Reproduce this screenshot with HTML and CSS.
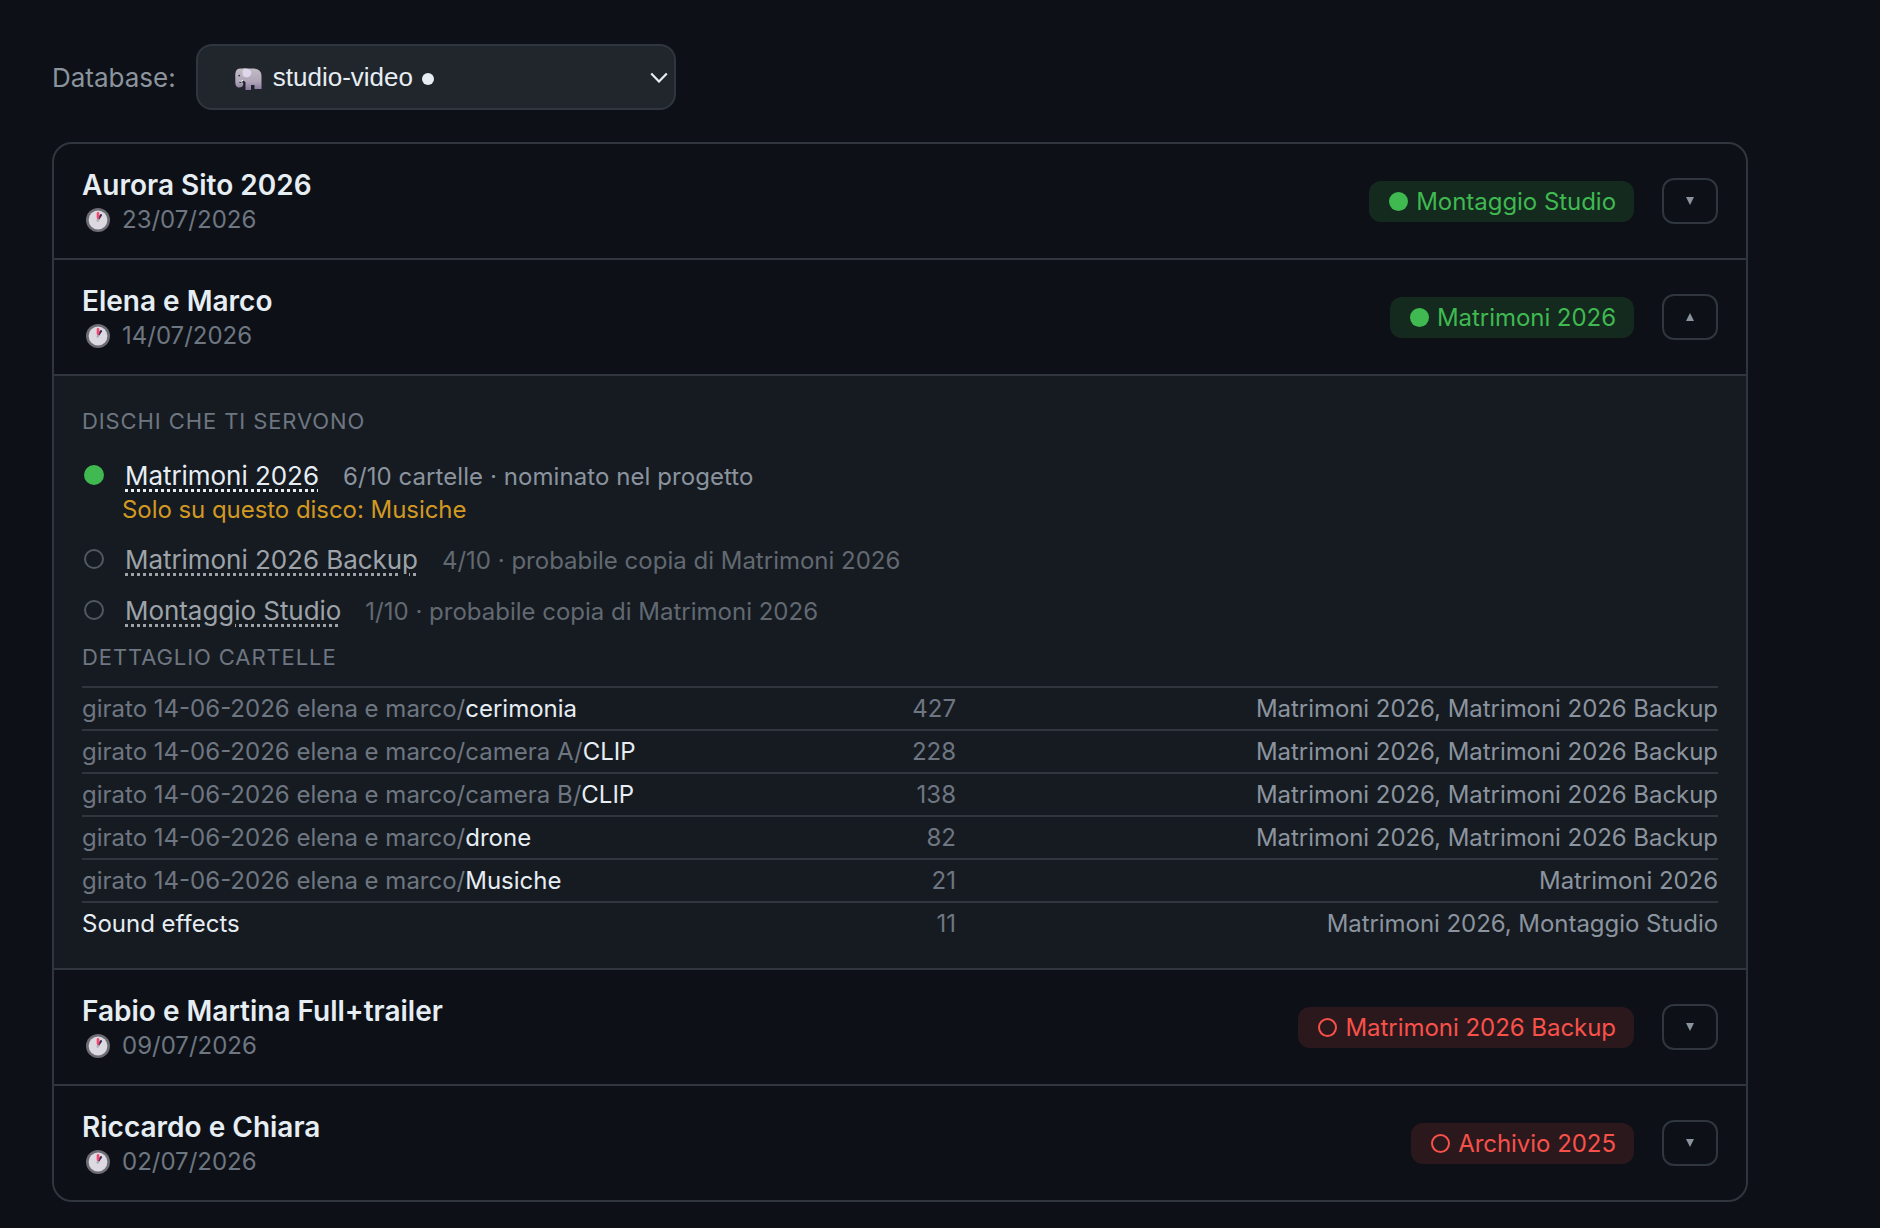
FILE: index.html
```html
<!DOCTYPE html>
<html lang="it">

<head>
    <meta charset="UTF-8">
    <meta name="viewport" content="width=device-width, initial-scale=1.0">
    <title>Progetti</title>
    <link rel="stylesheet" href="styles.css">
</head>

<body>

    <!-- icons used more than once -->
    <svg class="sprite" width="0" height="0">
        <symbol id="clock" viewBox="0 0 24 24">
            <circle cx="12" cy="12" r="12" fill="#6d6b73"/>
            <circle cx="12" cy="12" r="9.4" fill="#dcd9e0"/>
            <path d="M12.6 10.5 15 7.2" stroke="#3b2a5c" stroke-width="2.2" stroke-linecap="round"/>
            <path d="M12 9.6V5.4" stroke="#f8476a" stroke-width="2.6" stroke-linecap="round"/>
            <circle cx="11.8" cy="12.4" r="1.4" fill="#b3afb8"/>
        </symbol>
        <symbol id="down" viewBox="0 0 8 8">
            <path d="M0 0h8L4 8z" fill="#8b949e"/>
        </symbol>
        <symbol id="up" viewBox="0 0 8 8">
            <path d="M0 8h8L4 0z" fill="#8b949e"/>
        </symbol>
    </svg>

    <div class="toolbar">
        <span class="toolbar-label">Database:</span>
        <button class="db-select">
            <svg class="elephant" viewBox="0 0 27 22">
                <defs>
                    <linearGradient id="skin" x1="0" y1="0" x2="0" y2="1">
                        <stop offset="0" stop-color="#c2bcc4"/>
                        <stop offset="0.6" stop-color="#b0a6b8"/>
                        <stop offset="1" stop-color="#8a789f"/>
                    </linearGradient>
                </defs>
                <path d="M6 0.5Q2 0 0.8 3.5Q0 6 0.3 9V15Q0.6 19.4 4 19.6Q8 19.5 8.3 16Q8.2 13.8 6.6 14Q5.4 15.6 4.2 14.6V12.5L8 12.5L10.5 14V22H16V17H19.5V21H26.5V8Q26.5 1 19 0.5Z" fill="url(#skin)"/>
                <path d="M8.5 0.5Q7 3 7.6 6.5Q8.5 9.6 12 9.2Q16.5 8.8 16.3 4Q15 0 8.5 0.5Z" fill="#e0d6ea"/>
                <path d="M4 12.2Q6.2 12.8 8 11.8L8.2 13Q5.5 14.6 4 13.2Z" fill="#f4eff7"/>
                <circle cx="4.2" cy="7.6" r="0.9" fill="#3a2f45"/>
            </svg>
            <span class="db-name">studio-video</span>
            <span class="db-dot"></span>
            <svg class="chevron" viewBox="0 0 18 11">
                <path d="M1.2 1.5 9 9.5 16.8 1.5" fill="none" stroke="#e6edf3" stroke-width="2.2"/>
            </svg>
        </button>
    </div>

    <div class="projects">
        <div class="project">
            <div>
                <h2>Aurora Sito 2026</h2>
                <div class="date"><svg><use href="#clock"/></svg>23/07/2026</div>
            </div>
            <span class="badge online"><i></i>Montaggio Studio</span>
            <button class="toggle"><svg><use href="#down"/></svg></button>
        </div>

        <div class="project">
            <div>
                <h2>Elena e Marco</h2>
                <div class="date"><svg><use href="#clock"/></svg>14/07/2026</div>
            </div>
            <span class="badge online"><i></i>Matrimoni 2026</span>
            <button class="toggle"><svg><use href="#up"/></svg></button>
        </div>

        <div class="details">
            <h3>Dischi che ti servono</h3>
            <div class="disks">
                <div class="disk">
                    <i class="dot on"></i>
                    <span class="disk-name">Matrimoni 2026</span>
                    <span class="disk-info">6/10 cartelle · nominato nel progetto</span>
                </div>
                <p class="warning">Solo su questo disco: Musiche</p>
                <div class="disk off">
                    <i class="dot"></i>
                    <span class="disk-name">Matrimoni 2026 Backup</span>
                    <span class="disk-info">4/10 · probabile copia di Matrimoni 2026</span>
                </div>
                <div class="disk off">
                    <i class="dot"></i>
                    <span class="disk-name">Montaggio Studio</span>
                    <span class="disk-info">1/10 · probabile copia di Matrimoni 2026</span>
                </div>
            </div>

            <h3>Dettaglio cartelle</h3>
            <table>
                <tr>
                    <td class="path">girato 14-06-2026 elena e marco/<b>cerimonia</b></td>
                    <td class="count">427</td>
                    <td class="where">Matrimoni 2026, Matrimoni 2026 Backup</td>
                </tr>
                <tr>
                    <td class="path">girato 14-06-2026 elena e marco/camera A/<b>CLIP</b></td>
                    <td class="count">228</td>
                    <td class="where">Matrimoni 2026, Matrimoni 2026 Backup</td>
                </tr>
                <tr>
                    <td class="path">girato 14-06-2026 elena e marco/camera B/<b>CLIP</b></td>
                    <td class="count">138</td>
                    <td class="where">Matrimoni 2026, Matrimoni 2026 Backup</td>
                </tr>
                <tr>
                    <td class="path">girato 14-06-2026 elena e marco/<b>drone</b></td>
                    <td class="count">82</td>
                    <td class="where">Matrimoni 2026, Matrimoni 2026 Backup</td>
                </tr>
                <tr>
                    <td class="path">girato 14-06-2026 elena e marco/<b>Musiche</b></td>
                    <td class="count">21</td>
                    <td class="where">Matrimoni 2026</td>
                </tr>
                <tr>
                    <td class="path"><b>Sound effects</b></td>
                    <td class="count">11</td>
                    <td class="where">Matrimoni 2026, Montaggio Studio</td>
                </tr>
            </table>
        </div>

        <div class="project">
            <div>
                <h2>Fabio e Martina Full+trailer</h2>
                <div class="date"><svg><use href="#clock"/></svg>09/07/2026</div>
            </div>
            <span class="badge offline"><i></i>Matrimoni 2026 Backup</span>
            <button class="toggle"><svg><use href="#down"/></svg></button>
        </div>

        <div class="project">
            <div>
                <h2>Riccardo e Chiara</h2>
                <div class="date"><svg><use href="#clock"/></svg>02/07/2026</div>
            </div>
            <span class="badge offline"><i></i>Archivio 2025</span>
            <button class="toggle"><svg><use href="#down"/></svg></button>
        </div>
    </div>

</body>

</html>
```
FILE: styles.css
```css
* {
    padding: 0;
    margin: 0;
    box-sizing: border-box;
}

body {
    background-color: #0d1117;
    color: #e6edf3;
    font-family: Inter, sans-serif;
    font-size: 24px;
    line-height: 29px;
    padding: 44px 132px 26px 52px;
}

.sprite {
    display: block;
}

/* Toolbar */
.toolbar {
    display: flex;
    align-items: center;
    gap: 20px;
    margin-bottom: 32px;
}

.toolbar-label {
    padding-top: 2px;
    font-size: 26px;
    line-height: 32px;
    color: #8b949e;
}

.db-select {
    display: flex;
    align-items: center;
    width: 480px;
    height: 66px;
    padding: 0 6px 0 37px;
    background-color: #21262d;
    border: 2px solid #30363d;
    border-radius: 16px;
    color: #e6edf3;
    font-family: "Liberation Sans", Arial, sans-serif;
    font-size: 26px;
}

.elephant {
    width: 27px;
    height: 22px;
    margin-top: 3px;
}

.db-name {
    margin: 0 9px 0 11px;
}

.db-dot {
    width: 12px;
    height: 12px;
    margin-top: 3px;
    border-radius: 50%;
    background-color: #e6edf3;
}

.chevron {
    width: 18px;
    height: 11px;
    margin-left: auto;
}

/* Project list */
.projects {
    border: 2px solid #30363d;
    border-radius: 20px;
    overflow: hidden;
}

.project {
    display: flex;
    align-items: center;
    height: 114px;
    padding: 0 28px;
}

.project + .project,
.details + .project,
.details {
    border-top: 2px solid #30363d;
}

.project + .project,
.details + .project {
    height: 116px;
}

h2 {
    font-size: 28px;
    line-height: 34px;
    font-weight: 600;
}

.date {
    display: flex;
    align-items: center;
    margin-top: 3px;
    color: #6e7681;
}

.date svg {
    width: 24px;
    height: 24px;
    margin: 0 12px 0 4px;
}

.badge {
    display: flex;
    align-items: center;
    height: 41px;
    margin-left: auto;
    padding: 0 18px 0 20px;
    border-radius: 12px;
    letter-spacing: -0.04px;
}

.badge i {
    width: 19px;
    height: 19px;
    margin-right: 8px;
    border-radius: 50%;
}

.online {
    color: #3fb950;
    background-color: rgba(63, 185, 80, 0.15);
}

.online i {
    background-color: #3fb950;
}

.offline {
    color: #f85149;
    background-color: rgba(248, 81, 73, 0.13);
}

.offline i {
    border: 2px solid #f85149;
}

.toggle {
    display: flex;
    align-items: center;
    justify-content: center;
    width: 56px;
    height: 46px;
    margin-left: 28px;
    background-color: transparent;
    border: 2px solid #30363d;
    border-radius: 12px;
}

.toggle svg {
    width: 8px;
    height: 8px;
}

/* Expanded project */
.details {
    height: 594px;
    padding: 32px 28px 0;
    background-color: #161b22;
}

h3 {
    font-size: 22px;
    line-height: 27px;
    font-weight: 400;
    letter-spacing: 0.9px;
    text-transform: uppercase;
    color: #6e7681;
}

.disks {
    padding: 25px 0 17px;
}

.disk {
    display: flex;
    align-items: baseline;
    height: 32px;
    line-height: 32px;
}

.disk.off {
    margin-top: 19px;
}

.dot {
    width: 20px;
    height: 20px;
    margin: 0 21px 0 2px;
    border: 2px solid #505862;
    border-radius: 50%;
}

.dot.on {
    background-color: #3fb950;
    border-color: #3fb950;
}

.disk-name {
    font-size: 26px;
    letter-spacing: -0.05px;
    text-decoration: underline dotted 3px;
    text-underline-offset: 4px;
}

.disk-info {
    margin-left: 24px;
    letter-spacing: 0.07px;
    color: #8b949e;
}

.off .disk-name {
    color: #9da3a9;
}

.off .disk-info {
    letter-spacing: 0;
    color: #626971;
}

.warning {
    margin-top: 3px;
    padding: 0 0 1px 40px;
    letter-spacing: -0.05px;
    color: #d29922;
}

table {
    width: 100%;
    margin-top: 15px;
    border-spacing: 0;
}

td {
    padding: 6px 0;
    border-top: 2px solid #30363d;
}

.path {
    width: 774px;
    color: #6e7681;
}

.path b {
    font-weight: 400;
    color: #e6edf3;
}

.count {
    width: 100px;
    text-align: right;
    color: #6e7681;
}

.where {
    text-align: right;
    letter-spacing: -0.05px;
    color: #8b949e;
}
```
